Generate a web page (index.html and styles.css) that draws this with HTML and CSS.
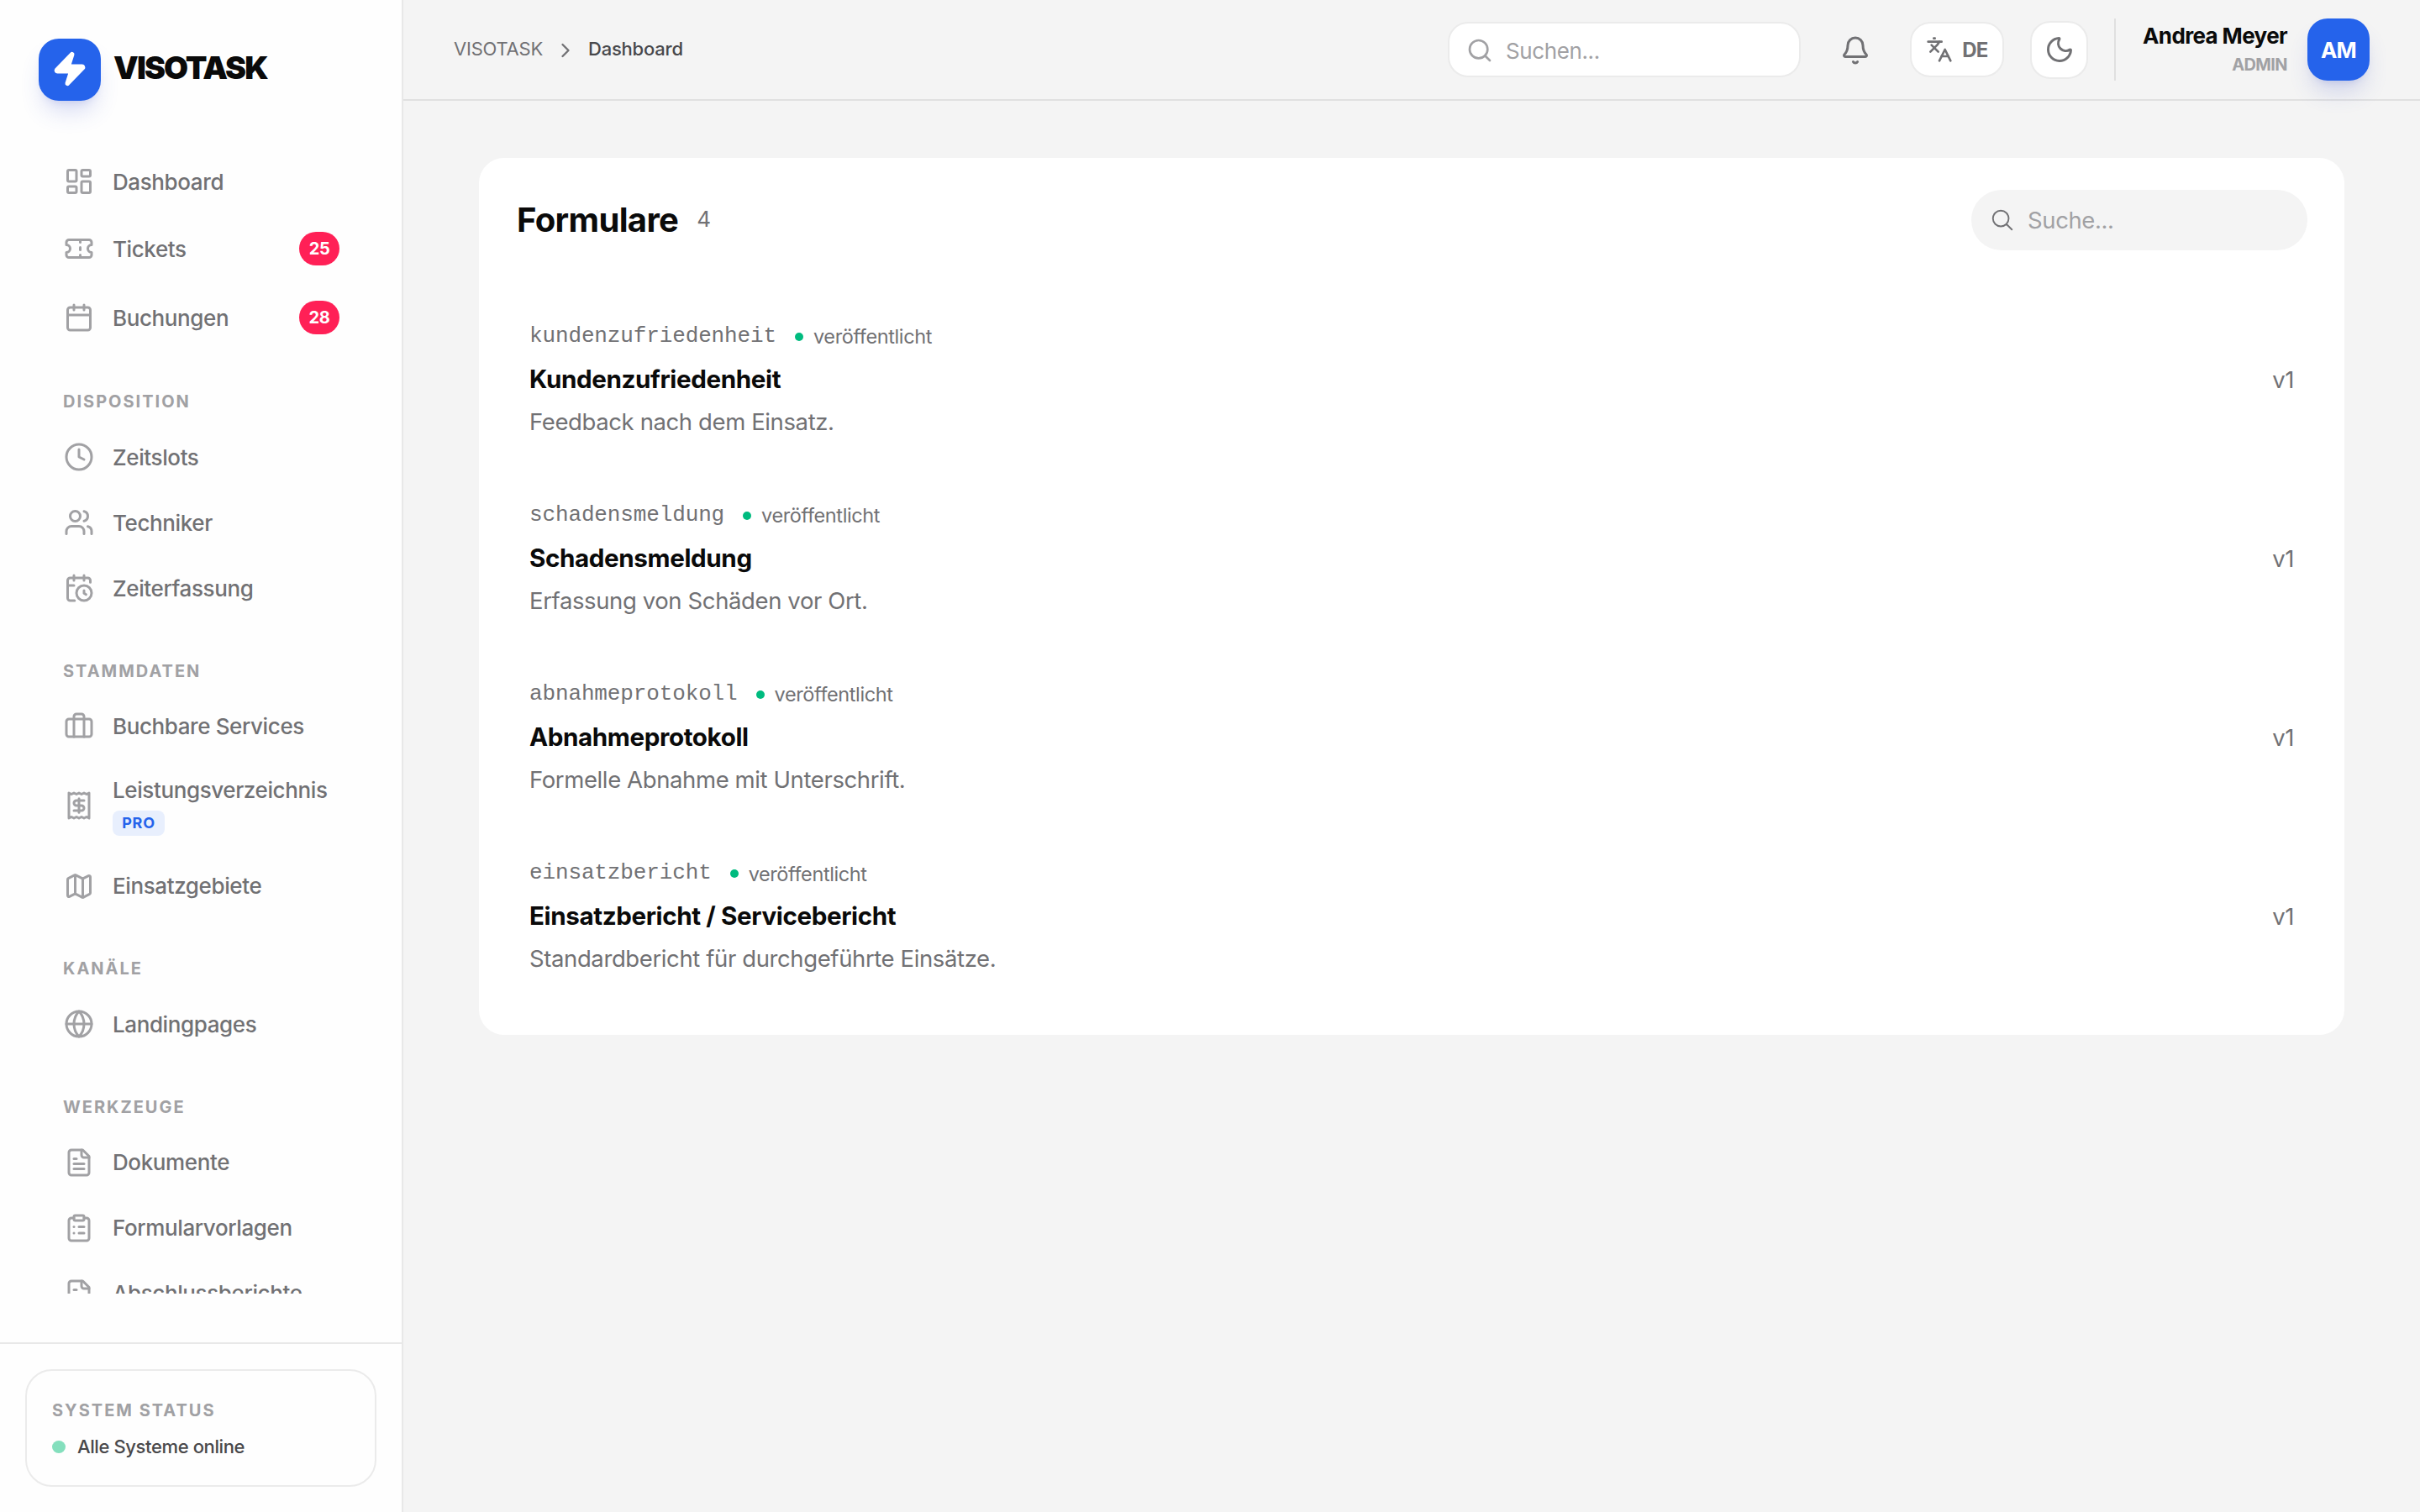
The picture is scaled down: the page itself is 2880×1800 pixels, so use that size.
FILE: index.html
```html
<!DOCTYPE html>
<html lang="de">
<head>
    <meta charset="UTF-8">
    <meta name="viewport" content="width=device-width, initial-scale=1.0">
    <title>VISOTASK - Formulare</title>
    <link rel="stylesheet" href="styles.css">
</head>
<body>
    <div class="app">
        <aside class="sidebar">
            <div class="brand">
                <div class="brand-logo">
                    <svg class="bolt" viewBox="0 0 24 24"><path d="M4 14a1 1 0 0 1-.78-1.63l9.9-10.2a.5.5 0 0 1 .86.46l-1.92 6.02A1 1 0 0 0 13 10h7a1 1 0 0 1 .78 1.63l-9.9 10.2a.5.5 0 0 1-.86-.46l1.92-6.02A1 1 0 0 0 11 14z"/></svg>
                </div>
                <span class="brand-name">VISOTASK</span>
            </div>

            <nav class="nav">
                <a class="nav-item">
                    <svg class="icon" viewBox="0 0 24 24"><rect width="7" height="9" x="3" y="3" rx="1"/><rect width="7" height="5" x="14" y="3" rx="1"/><rect width="7" height="9" x="14" y="12" rx="1"/><rect width="7" height="5" x="3" y="16" rx="1"/></svg>
                    <span class="nav-label">Dashboard</span>
                </a>
                <a class="nav-item has-badge">
                    <svg class="icon" viewBox="0 0 24 24"><path d="M2 9a3 3 0 0 1 0 6v2a2 2 0 0 0 2 2h16a2 2 0 0 0 2-2v-2a3 3 0 0 1 0-6V7a2 2 0 0 0-2-2H4a2 2 0 0 0-2 2Z"/><path d="M13 5v2"/><path d="M13 17v2"/><path d="M13 11v2"/></svg>
                    <span class="nav-label">Tickets</span>
                    <span class="badge">25</span>
                </a>
                <a class="nav-item has-badge">
                    <svg class="icon" viewBox="0 0 24 24"><path d="M8 2v4"/><path d="M16 2v4"/><rect width="18" height="18" x="3" y="4" rx="2"/><path d="M3 10h18"/></svg>
                    <span class="nav-label">Buchungen</span>
                    <span class="badge">28</span>
                </a>

                <h3 class="nav-title">Disposition</h3>
                <a class="nav-item">
                    <svg class="icon" viewBox="0 0 24 24"><circle cx="12" cy="12" r="10"/><path d="M12 6v6l4 2"/></svg>
                    <span class="nav-label">Zeitslots</span>
                </a>
                <a class="nav-item">
                    <svg class="icon" viewBox="0 0 24 24"><path d="M16 21v-2a4 4 0 0 0-4-4H6a4 4 0 0 0-4 4v2"/><path d="M16 3.128a4 4 0 0 1 0 7.744"/><path d="M22 21v-2a4 4 0 0 0-3-3.87"/><circle cx="9" cy="7" r="4"/></svg>
                    <span class="nav-label">Techniker</span>
                </a>
                <a class="nav-item">
                    <svg class="icon" viewBox="0 0 24 24"><path d="M16 14v2.2l1.6 1"/><path d="M16 2v4"/><path d="M21 7.5V6a2 2 0 0 0-2-2H5a2 2 0 0 0-2 2v14a2 2 0 0 0 2 2h3.5"/><path d="M3 10h5"/><path d="M8 2v4"/><circle cx="16" cy="16" r="6"/></svg>
                    <span class="nav-label">Zeiterfassung</span>
                </a>

                <h3 class="nav-title">Stammdaten</h3>
                <a class="nav-item">
                    <svg class="icon" viewBox="0 0 24 24"><path d="M16 20V4a2 2 0 0 0-2-2h-4a2 2 0 0 0-2 2v16"/><rect width="20" height="14" x="2" y="6" rx="2"/></svg>
                    <span class="nav-label">Buchbare Services</span>
                </a>
                <a class="nav-item nav-item-pro">
                    <svg class="icon" viewBox="0 0 24 24"><path d="M4 2v20l2-1 2 1 2-1 2 1 2-1 2 1 2-1 2 1V2l-2 1-2-1-2 1-2-1-2 1-2-1-2 1Z"/><path d="M16 8h-6a2 2 0 1 0 0 4h4a2 2 0 1 1 0 4H8"/><path d="M12 17.5v-11"/></svg>
                    <span class="nav-label">
                        <span class="nav-text">Leistungsverzeichnis</span>
                        <span class="pro">PRO</span>
                    </span>
                </a>
                <a class="nav-item">
                    <svg class="icon" viewBox="0 0 24 24"><path d="M14.106 5.553a2 2 0 0 0 1.788 0l3.659-1.83A1 1 0 0 1 21 4.619v12.764a1 1 0 0 1-.553.894l-4.553 2.277a2 2 0 0 1-1.788 0l-4.212-2.106a2 2 0 0 0-1.788 0l-3.659 1.83A1 1 0 0 1 3 19.381V6.618a1 1 0 0 1 .553-.894l4.553-2.277a2 2 0 0 1 1.788 0z"/><path d="M15 5.764v15"/><path d="M9 3.236v15"/></svg>
                    <span class="nav-label">Einsatzgebiete</span>
                </a>

                <h3 class="nav-title">Kanäle</h3>
                <a class="nav-item">
                    <svg class="icon" viewBox="0 0 24 24"><circle cx="12" cy="12" r="10"/><path d="M12 2a14.5 14.5 0 0 0 0 20 14.5 14.5 0 0 0 0-20"/><path d="M2 12h20"/></svg>
                    <span class="nav-label">Landingpages</span>
                </a>

                <h3 class="nav-title">Werkzeuge</h3>
                <a class="nav-item">
                    <svg class="icon" viewBox="0 0 24 24"><path d="M15 2H6a2 2 0 0 0-2 2v16a2 2 0 0 0 2 2h12a2 2 0 0 0 2-2V7Z"/><path d="M14 2v4a2 2 0 0 0 2 2h4"/><path d="M10 9H8"/><path d="M16 13H8"/><path d="M16 17H8"/></svg>
                    <span class="nav-label">Dokumente</span>
                </a>
                <a class="nav-item">
                    <svg class="icon" viewBox="0 0 24 24"><rect width="8" height="4" x="8" y="2" rx="1"/><path d="M16 4h2a2 2 0 0 1 2 2v14a2 2 0 0 1-2 2H6a2 2 0 0 1-2-2V6a2 2 0 0 1 2-2h2"/><path d="M12 11h4"/><path d="M12 16h4"/><path d="M8 11h.01"/><path d="M8 16h.01"/></svg>
                    <span class="nav-label">Formularvorlagen</span>
                </a>
                <a class="nav-item">
                    <svg class="icon" viewBox="0 0 24 24"><path d="M15 2H6a2 2 0 0 0-2 2v16a2 2 0 0 0 2 2h12a2 2 0 0 0 2-2V7Z"/><path d="M14 2v4a2 2 0 0 0 2 2h4"/><path d="M10 9H8"/><path d="M16 13H8"/><path d="M16 17H8"/></svg>
                    <span class="nav-label">Abschlussberichte</span>
                </a>
            </nav>

            <div class="sidebar-footer">
                <div class="status-box">
                    <p class="status-title">System Status</p>
                    <p class="status-line"><span class="status-dot"></span>Alle Systeme online</p>
                </div>
            </div>
        </aside>

        <div class="main">
            <header class="topbar">
                <div class="breadcrumb">
                    <span>VISOTASK</span>
                    <svg class="icon chevron" viewBox="0 0 24 24"><path d="m9 18 6-6-6-6"/></svg>
                    <span class="current">Dashboard</span>
                </div>
                <div class="topbar-right">
                    <div class="search">
                        <svg class="icon" viewBox="0 0 24 24"><path d="m21 21-4.34-4.34"/><circle cx="11" cy="11" r="8"/></svg>
                        <span>Suchen...</span>
                    </div>
                    <svg class="icon bell" viewBox="0 0 24 24"><path d="M10.268 21a2 2 0 0 0 3.464 0"/><path d="M3.262 15.326A1 1 0 0 0 4 17h16a1 1 0 0 0 .74-1.673C19.41 13.956 18 12.499 18 8A6 6 0 0 0 6 8c0 4.499-1.411 5.956-2.738 7.326"/></svg>
                    <button class="lang">
                        <svg class="icon" viewBox="0 0 24 24"><path d="m5 8 6 6"/><path d="m4 14 6-6 2-3"/><path d="M2 5h12"/><path d="M7 2h1"/><path d="m22 22-5-10-5 10"/><path d="M14 18h6"/></svg>
                        <span>DE</span>
                    </button>
                    <button class="theme">
                        <svg class="icon" viewBox="0 0 24 24"><path d="M20.985 12.486a9 9 0 1 1-9.473-9.472c.405-.022.617.46.402.803a6 6 0 0 0 8.268 8.268c.344-.215.825-.004.803.401"/></svg>
                    </button>
                    <div class="user">
                        <div class="user-info">
                            <span class="user-name">Andrea Meyer</span>
                            <span class="user-role">ADMIN</span>
                        </div>
                        <div class="avatar">AM</div>
                    </div>
                </div>
            </header>

            <section class="card">
                <div class="card-header">
                    <h1>Formulare</h1>
                    <span class="count">4</span>
                    <div class="card-search">
                        <svg class="icon" viewBox="0 0 24 24"><path d="m21 21-5.197-5.197m0 0A7.5 7.5 0 1 0 5.196 5.196a7.5 7.5 0 0 0 10.607 10.607Z"/></svg>
                        <span>Suche...</span>
                    </div>
                </div>
                <div class="list">
                    <div class="row">
                        <div>
                            <div class="meta"><code>kundenzufriedenheit</code><span class="state">veröffentlicht</span></div>
                            <h2>Kundenzufriedenheit</h2>
                            <p>Feedback nach dem Einsatz.</p>
                        </div>
                        <span class="version">v1</span>
                    </div>
                    <div class="row">
                        <div>
                            <div class="meta"><code>schadensmeldung</code><span class="state">veröffentlicht</span></div>
                            <h2>Schadensmeldung</h2>
                            <p>Erfassung von Schäden vor Ort.</p>
                        </div>
                        <span class="version">v1</span>
                    </div>
                    <div class="row">
                        <div>
                            <div class="meta"><code>abnahmeprotokoll</code><span class="state">veröffentlicht</span></div>
                            <h2>Abnahmeprotokoll</h2>
                            <p>Formelle Abnahme mit Unterschrift.</p>
                        </div>
                        <span class="version">v1</span>
                    </div>
                    <div class="row">
                        <div>
                            <div class="meta"><code>einsatzbericht</code><span class="state">veröffentlicht</span></div>
                            <h2>Einsatzbericht / Servicebericht</h2>
                            <p>Standardbericht für durchgeführte Einsätze.</p>
                        </div>
                        <span class="version">v1</span>
                    </div>
                </div>
            </section>
        </div>
    </div>
</body>
</html>
```

FILE: styles.css
```css
* {
    box-sizing: border-box;
}
body {
    margin: 0;
    font-family: Inter, sans-serif;
    font-size: 26px;
    letter-spacing: -0.015em;
    color: #0a0a0a;
    background-color: #f4f4f4;
}
h1, h2, h3, p {
    margin: 0;
}
.app {
    display: flex;
    height: 1800px;
    overflow: hidden;
}
.icon {
    width: 36px;
    height: 36px;
    flex-shrink: 0;
    fill: none;
    stroke: currentColor;
    stroke-width: 2;
    stroke-linecap: round;
    stroke-linejoin: round;
}

/* Sidebar */
.sidebar {
    width: 480px;
    flex-shrink: 0;
    display: flex;
    flex-direction: column;
    background-color: #fefefe;
    border-right: 2px solid #e8e8e8;
}
.brand {
    display: flex;
    align-items: center;
    gap: 15px;
    padding: 46px 46px 59px;
}
.brand-logo, .avatar {
    width: 74px;
    height: 74px;
    flex-shrink: 0;
    display: flex;
    align-items: center;
    justify-content: center;
    background-color: #2563eb;
    border-radius: 24px;
    box-shadow: 0 18px 28px -6px rgba(60, 80, 200, 0.2), 0 7px 11px -7px rgba(60, 80, 200, 0.2);
}
.bolt {
    width: 44px;
    height: 44px;
    margin-bottom: 2px;
    fill: #fff;
    stroke: #fff;
    stroke-width: 2;
    stroke-linejoin: round;
}
.brand-name {
    font-size: 37.5px;
    font-weight: 900;
    letter-spacing: -0.051em;
    line-height: 60px;
    padding-bottom: 4px;
}
.nav {
    flex: 1;
    min-height: 0;
    overflow: hidden;
    padding: 0 58px 0 60px;
    margin-bottom: 58px;
}
.nav-item {
    display: flex;
    align-items: center;
    gap: 22px;
    height: 74px;
    padding: 0 16px;
    margin-bottom: 4px;
    font-weight: 500;
    color: #717174;
}
.nav-item .icon {
    color: #a1a1a4;
}
.nav-item.has-badge {
    height: 78px;
}
.nav-item-pro {
    height: auto;
    padding-top: 18px;
    padding-bottom: 19px;
}
.nav-label {
    flex: 1;
}
.nav-text {
    display: block;
    line-height: 34px;
    margin-bottom: 7px;
}
.badge {
    width: 48px;
    line-height: 40px;
    text-align: center;
    border-radius: 20px;
    background-color: #ff2056;
    color: #fff;
    font-size: 20px;
    font-weight: 700;
}
.pro {
    display: block;
    width: 62px;
    line-height: 30px;
    text-align: center;
    border-radius: 8px;
    background-color: #e8effd;
    color: #2563eb;
    font-size: 18px;
    font-weight: 700;
    letter-spacing: 0.04em;
}
.nav-title, .status-title {
    font-size: 20px;
    font-weight: 700;
    line-height: 30px;
    letter-spacing: 0.1em;
    text-transform: uppercase;
    color: #a1a1a4;
}
.nav-title {
    padding: 42.3px 15px 14.2px;
}
.sidebar-footer {
    border-top: 2px solid #e8e8e8;
    padding: 30px;
}
.status-box {
    height: 140px;
    border: 2px solid #ebebeb;
    border-radius: 32px;
    padding: 32px 30px;
}
.status-line {
    display: flex;
    align-items: center;
    gap: 14px;
    margin-top: 12px;
    font-size: 22px;
    font-weight: 500;
    line-height: 33px;
    color: #48484b;
}
.status-dot {
    width: 16px;
    height: 15px;
    border-radius: 50%;
    background-color: #84dfbd;
}

/* Topbar */
.main {
    flex: 1;
}
.topbar {
    display: flex;
    justify-content: space-between;
    align-items: center;
    height: 120px;
    padding: 0 60px;
    border-bottom: 2px solid #e0e0e0;
}
.breadcrumb {
    display: flex;
    align-items: center;
    font-size: 22px;
    letter-spacing: -0.01em;
    color: #717174;
    gap: 13px;
    padding-bottom: 2px;
}
.chevron {
    width: 28px;
    height: 28px;
    margin-top: 3px;
}
.current {
    font-weight: 500;
    color: #48484b;
}
.topbar-right {
    display: flex;
    align-items: center;
    color: #717174;
}
.search {
    display: flex;
    align-items: center;
    gap: 15px;
    width: 420px;
    height: 66px;
    padding: 2px 0 0 20px;
    border: 2px solid #ebebeb;
    border-radius: 24px;
    background-color: #fff;
    color: #a1a1a4;
}
.search .icon, .lang .icon {
    width: 32px;
    height: 32px;
}
.bell {
    margin: 2px 47px 0;
}
.lang, .theme {
    display: flex;
    align-items: center;
    justify-content: center;
    padding: 0;
    border: 2px solid #ebebeb;
    border-radius: 24px;
    background-color: #fff;
    font: inherit;
    color: inherit;
}
.lang {
    gap: 11px;
    width: 112px;
    height: 66px;
    font-size: 24px;
    font-weight: 700;
    letter-spacing: -0.03em;
}
.theme {
    width: 69px;
    height: 69px;
    margin: 0 31px;
}
.user {
    display: flex;
    align-items: center;
    gap: 24px;
    padding-left: 31px;
    border-left: 2px solid #e0e0e0;
}
.user-info {
    display: flex;
    flex-direction: column;
    align-items: flex-end;
    width: 173px;
    white-space: nowrap;
}
.user-name {
    font-weight: 700;
    line-height: 36px;
    letter-spacing: -0.024em;
    color: #0a0a0a;
}
.user-role {
    font-size: 20px;
    font-weight: 700;
    line-height: 32px;
    letter-spacing: -0.03em;
    color: #a1a1a4;
}
.avatar {
    color: #fff;
    font-weight: 700;
    letter-spacing: -0.03em;
}

/* Forms card */
.card {
    height: 1044px;
    margin: 68px 90px 0;
    padding-top: 38px;
    border-radius: 30px;
    background-color: #fff;
}
.card-header {
    display: flex;
    align-items: center;
    padding: 0 44px 0 45px;
    margin-bottom: 48px;
}
.card-header h1 {
    font-size: 40px;
    font-weight: 700;
    letter-spacing: -0.016em;
    padding-bottom: 2px;
}
.count {
    margin: 0 auto 3px 22px;
    color: #717174;
}
.card-search {
    display: flex;
    align-items: center;
    gap: 15px;
    width: 400px;
    height: 72px;
    padding-left: 22px;
    border-radius: 36px;
    background-color: #f4f4f4;
    font-size: 27.5px;
    color: #a1a1a4;
}
.card-search .icon {
    width: 30px;
    height: 30px;
    stroke-width: 1.5;
    color: #717174;
}
.list {
    padding: 0 60px;
}
.row {
    display: flex;
    align-items: center;
    justify-content: space-between;
    height: 213.2px;
    font-size: 27.5px;
    color: #717174;
}
.meta {
    display: flex;
    align-items: center;
    gap: 22px;
    height: 36px;
    margin-bottom: 10px;
    font-size: 23.5px;
}
.meta code {
    font-family: "Liberation Mono", monospace;
    font-size: 26px;
    letter-spacing: -0.005em;
    padding-bottom: 2px;
}
.state {
    display: flex;
    align-items: center;
    gap: 12px;
}
.state::before {
    content: "";
    width: 10px;
    height: 10px;
    border-radius: 50%;
    background-color: #00bb7f;
}
.row h2 {
    font-size: 29.6px;
    font-weight: 700;
    line-height: 45px;
    margin-bottom: 7px;
    color: #0a0a0a;
}
.row p {
    line-height: 42px;
}
.version {
    padding-bottom: 2px;
}
```
